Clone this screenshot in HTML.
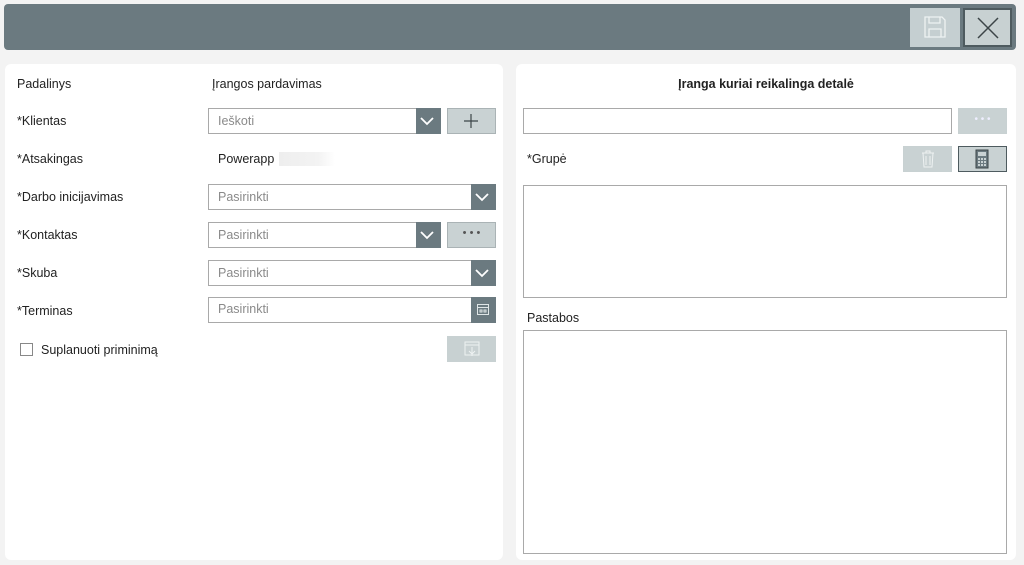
<!DOCTYPE html>
<html><head><meta charset="utf-8"><style>
*{box-sizing:border-box;margin:0;padding:0}
body{width:1024px;height:565px;background:#f3f3f3;font-family:"Liberation Sans",sans-serif;font-size:12.5px;color:#222;position:relative;overflow:hidden}
.a{position:absolute}
.bar{left:4px;top:4px;width:1012px;height:46px;background:#6b7a80;border-radius:4px}
.panel{background:#fff;border-radius:6px}
.lbl{font-size:12.5px;color:#222}
.inp{background:#fff;border:1px solid #a9a9a9;color:#8a8a8a;padding-left:9px;line-height:24px;height:26px}
.dd{background:#6b7a80}
.btn{background:#c9d2d3;border:1px solid #aab3b5}
</style></head><body>
<div class="a bar"></div>
<div class="a" style="left:910px;top:8px;width:50px;height:39px;background:#c5cfd1"></div>
<svg class="a" style="left:923px;top:15px" width="24" height="24" viewBox="0 0 24 24" fill="none" stroke="#eef2f2" stroke-width="1.3"><path d="M2 2h17l3 3v17H2z"/><path d="M6 2v6h11V2"/><path d="M6 22v-8h12v8"/></svg>
<div class="a" style="left:963px;top:8px;width:49px;height:39px;background:#c8d1d2;border:2px solid #4e5b5f"></div>
<svg class="a" style="left:977px;top:17px" width="22" height="22" viewBox="0 0 22 22" stroke="#3c4548" stroke-width="1.5"><path d="M1 1L21 21M21 1L1 21"/></svg>

<div class="a panel" style="left:5px;top:64px;width:498px;height:496px"></div>
<div class="a panel" style="left:516px;top:64px;width:500px;height:496px"></div>

<div class="a lbl" style="left:17px;top:77px">Padalinys</div>
<div class="a lbl" style="left:212px;top:77px">Įrangos pardavimas</div>
<div class="a lbl" style="left:17px;top:114px">*Klientas</div>
<div class="a lbl" style="left:17px;top:152px">*Atsakingas</div>
<div class="a lbl" style="left:17px;top:190px">*Darbo inicijavimas</div>
<div class="a lbl" style="left:17px;top:228px">*Kontaktas</div>
<div class="a lbl" style="left:17px;top:266px">*Skuba</div>
<div class="a lbl" style="left:17px;top:304px">*Terminas</div>

<div class="a inp" style="left:208px;top:108px;width:233px">Ieškoti</div>
<div class="a dd" style="left:416px;top:108px;width:25px;height:26px"></div>
<div class="a btn" style="left:447px;top:108px;width:49px;height:26px"></div>
<svg class="a" style="left:463px;top:113px" width="16" height="16" stroke="#3c4548" stroke-width="1.2"><path d="M8 1v14M1 8h14"/></svg>

<div class="a lbl" style="left:218px;top:152px">Powerapp</div>
<div class="a" style="left:279px;top:152px;width:56px;height:14px;background:linear-gradient(90deg,#eee,#f3f3f3 70%,#fff)"></div>

<div class="a inp" style="left:208px;top:184px;width:288px">Pasirinkti</div>
<div class="a dd" style="left:471px;top:184px;width:25px;height:26px"></div>
<div class="a inp" style="left:208px;top:222px;width:233px">Pasirinkti</div>
<div class="a dd" style="left:416px;top:222px;width:25px;height:26px"></div>
<div class="a btn" style="left:447px;top:222px;width:49px;height:26px;text-align:center;line-height:20px;color:#555;font-size:11px">• • •</div>
<div class="a inp" style="left:208px;top:260px;width:288px">Pasirinkti</div>
<div class="a dd" style="left:471px;top:260px;width:25px;height:26px"></div>
<div class="a inp" style="left:208px;top:297px;width:288px;line-height:22px">Pasirinkti</div>
<div class="a dd" style="left:471px;top:297px;width:25px;height:26px"></div>
<svg class="a" style="left:476px;top:303px" width="14" height="13" fill="none" stroke="#dfe5e6" stroke-width="1"><rect x="1.5" y="1.5" width="11" height="10"/><path d="M1.5 4.5h11M4 7h2v2H4zM8 7h2v2H8z"/></svg>
<svg class="a" style="left:0;top:0" width="1024" height="300" fill="none" stroke="#fff" stroke-width="1.8"><path d="M421 118l6 6 6-6M421 232l6 6 6-6M476 194l6 6 6-6M476 270l6 6 6-6"/></svg>

<div class="a" style="left:20px;top:343px;width:13px;height:13px;border:1px solid #888;background:#fff"></div>
<div class="a lbl" style="left:41px;top:343px">Suplanuoti priminimą</div>
<div class="a btn" style="left:447px;top:336px;width:49px;height:26px;background:#c8d1d2;border-color:#c8d1d2"></div>
<svg class="a" style="left:463px;top:340px" width="18" height="18" fill="none" stroke="#eef2f2" stroke-width="1"><rect x="2" y="2" width="14" height="13"/><path d="M2 5h14M9 7v9M6 11l3 3 3-3"/></svg>

<div class="a" style="left:516px;top:77px;width:500px;text-align:center;font-weight:bold;font-size:12.5px">Įranga kuriai reikalinga detalė</div>
<div class="a inp" style="left:523px;top:108px;width:429px"></div>
<div class="a btn" style="left:958px;top:108px;width:49px;height:26px;border-color:#c8d1d2;text-align:center;line-height:22px;color:#eef;font-size:10px">• • •</div>
<div class="a lbl" style="left:527px;top:152px">*Grupė</div>
<div class="a btn" style="left:903px;top:146px;width:49px;height:26px;border-color:#c8d1d2"></div>
<svg class="a" style="left:920px;top:149px" width="16" height="20" fill="none" stroke="#eef2f2" stroke-width="1"><path d="M2 4h12M6 4V2h4v2M3 4l1 14h8l1-14M6 7v9M10 7v9"/></svg>
<div class="a btn" style="left:958px;top:146px;width:49px;height:26px;border:1px solid #4e5b5f"></div>
<svg class="a" style="left:975px;top:149px" width="14" height="20"><rect x="1" y="1" width="12" height="18" fill="#6b7a80" stroke="#3c4548"/><rect x="3" y="3" width="8" height="4" fill="#c9d2d3"/><g fill="#c9d2d3"><rect x="3" y="9" width="2" height="2"/><rect x="6" y="9" width="2" height="2"/><rect x="9" y="9" width="2" height="2"/><rect x="3" y="12" width="2" height="2"/><rect x="6" y="12" width="2" height="2"/><rect x="9" y="12" width="2" height="2"/><rect x="3" y="15" width="2" height="2"/><rect x="6" y="15" width="2" height="2"/><rect x="9" y="15" width="2" height="2"/></g></svg>
<div class="a" style="left:523px;top:185px;width:484px;height:113px;border:1px solid #a9a9a9"></div>
<div class="a lbl" style="left:527px;top:311px">Pastabos</div>
<div class="a" style="left:523px;top:330px;width:484px;height:224px;border:1px solid #a9a9a9"></div>
</body></html>
